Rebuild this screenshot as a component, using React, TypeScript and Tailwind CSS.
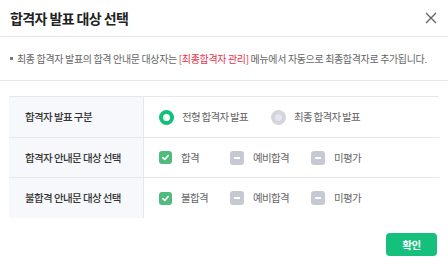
import React from "react";

const font = { fontFamily: '"Noto Sans CJK KR", "Noto Sans", sans-serif' };

function Radio({ checked, label }: { checked: boolean; label: string }) {
  return (
    <div className="flex items-center">
      {checked ? (
        <span className="w-[15px] h-[15px] rounded-full border-[4px] border-[#12c07a] bg-white box-border" />
      ) : (
        <span className="w-[15px] h-[15px] rounded-full bg-[#d3d5dd] flex items-center justify-center">
          <span className="w-[7px] h-[7px] rounded-full bg-[#e4e6ec]" />
        </span>
      )}
      <span className="ml-[8px] text-[10.5px] tracking-[-0.7px] text-[#666]">{label}</span>
    </div>
  );
}

function Check({ checked, label, w }: { checked: boolean; label: string; w: string }) {
  return (
    <div className={`flex items-center ${w}`}>
      {checked ? (
        <span className="w-[13px] h-[13px] rounded-[3px] bg-[#50bb7d] flex items-center justify-center">
          <svg width="9" height="9" viewBox="0 0 10 10">
            <path d="M2 5.2 L4.2 7.2 L8 2.8" stroke="#fff" strokeWidth="1.8" fill="none" strokeLinecap="round" strokeLinejoin="round" />
          </svg>
        </span>
      ) : (
        <span className="w-[14px] h-[14px] rounded-[3px] bg-[#c6c9d3] flex items-center justify-center">
          <span className="w-[6px] h-[2px] bg-white" />
        </span>
      )}
      <span className="ml-[9px] text-[10.5px] tracking-[-0.7px] text-[#666]">{label}</span>
    </div>
  );
}

function Label({ children }: { children: React.ReactNode }) {
  return (
    <div className="w-[135px] bg-[#f7f8fc] border-r border-[#e6e7ed] flex items-center pl-[16px] text-[10.5px] tracking-[-0.6px] font-medium text-[#333]">
      {children}
    </div>
  );
}

export default function App() {
  return (
    <div className="w-[448px] h-[267px] bg-white relative" style={font}>
      <div className="h-[37px] flex items-center justify-between pl-[10px] pr-[11px] border-b border-[#e6e7ed]">
        <div className="text-[14px] font-bold tracking-[-0.6px] text-[#222]">합격자 발표 대상 선택</div>
        <svg width="12" height="12" viewBox="0 0 12 12">
          <path d="M1 1 L11 11 M11 1 L1 11" stroke="#666" strokeWidth="1.4" />
        </svg>
      </div>
      <div className="h-[44px] flex items-center pl-[10px] border-b border-[#e6e7ed]">
        <span className="w-[3px] h-[3px] bg-[#777] mr-[4px]" />
        <span className="text-[10px] tracking-[-0.35px] text-[#666] whitespace-nowrap">
          최종 합격자 발표의 합격 안내문 대상자는 <span className="text-[#e8344e]">[최종합격자 관리]</span> 메뉴에서 자동으로 최종합격자로 추가됩니다.
        </span>
      </div>
      <div className="mt-[15px] mx-[9px] border-t border-[#e6e7ed]">
        <div className="flex h-[41px] border-b border-[#e6e7ed]">
          <Label>합격자 발표 구분</Label>
          <div className="flex items-center pl-[15px]">
            <div className="w-[112px]"><Radio checked label="전형 합격자 발표" /></div>
            <Radio checked={false} label="최종 합격자 발표" />
          </div>
        </div>
        <div className="flex h-[40px] border-b border-[#e6e7ed]">
          <Label>합격자 안내문 대상 선택</Label>
          <div className="flex items-center pl-[15px]">
            <Check checked label="합격" w="w-[71px]" />
            <Check checked={false} label="예비합격" w="w-[81px]" />
            <Check checked={false} label="미평가" w="w-[70px]" />
          </div>
        </div>
        <div className="flex h-[40px]">
          <Label>불합격 안내문 대상 선택</Label>
          <div className="flex items-center pl-[15px]">
            <Check checked label="불합격" w="w-[71px]" />
            <Check checked={false} label="예비합격" w="w-[81px]" />
            <Check checked={false} label="미평가" w="w-[70px]" />
          </div>
        </div>
      </div>
      <div className="flex justify-end pr-[11px] mt-[15px]">
        <button className="w-[51px] h-[23px] rounded-[4px] bg-[#14c07b] text-white text-[10.5px] font-bold tracking-[-0.5px]">확인</button>
      </div>
    </div>
  );
}
